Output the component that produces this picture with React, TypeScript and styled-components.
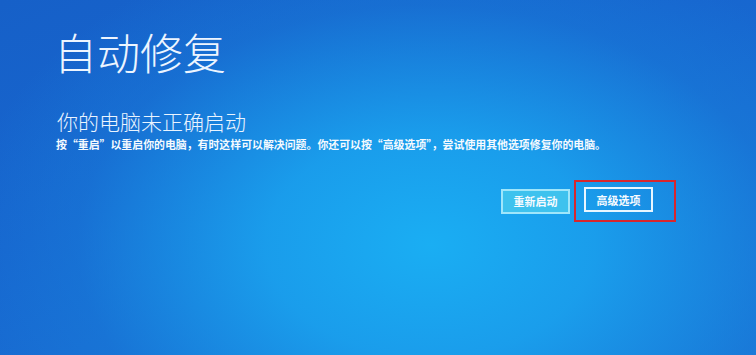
import React from "react";
import styled, { createGlobalStyle } from "styled-components";

const Global = createGlobalStyle`
  html, body { margin: 0; padding: 0; }
  body { width: 756px; height: 355px; overflow: hidden; }
`;

const Screen = styled.div`
  width: 756px;
  height: 355px;
  box-sizing: border-box;
  padding: 23px 0 0 57px;
  font-family: "Noto Sans CJK SC", "Noto Sans", sans-serif;
  color: #eef6ff;
  background:
    radial-gradient(ellipse 470px 320px at 430px 245px, rgba(26,174,243,1) 0%, rgba(26,162,238,0.9) 35%, rgba(24,125,218,0.45) 75%, rgba(22,100,205,0) 100%),
    linear-gradient(160deg, #1660c8 0%, #1766cf 40%, #1a78d8 100%);
  display: flex;
  flex-direction: column;
`;

const Title = styled.h1`
  margin: 0 0 0 -3px;
  font-size: 43px;
  font-weight: 300;
  line-height: 56px;
  color: #edf5ff;
`;

const Subtitle = styled.h2`
  margin: 29px 0 0;
  font-size: 21px;
  font-weight: 300;
  line-height: 26px;
  color: #eaf4ff;
`;

const Body = styled.p`
  margin: 2px 0 0 -1px;
  font-size: 10.9px;
  font-weight: 700;
  line-height: 16px;
  color: #f4faff;
`;

const ButtonRow = styled.div`
  display: flex;
  align-items: center;
  gap: 4px;
  margin: 28px 0 0 444px;
`;

const Button = styled.div<{ $filled?: boolean }>`
  box-sizing: border-box;
  width: 69px;
  height: 25px;
  display: flex;
  align-items: center;
  justify-content: center;
  border: 2px solid ${(p) => (p.$filled ? "#9fe6fb" : "#e9f6ff")};
  background: ${(p) => (p.$filled ? "#3ec2ee" : "transparent")};
  color: #f6fbff;
  font-size: 11px;
  font-weight: 700;
`;

const Highlight = styled.div`
  border: 2px solid #d8262d;
  padding: 5px 21px 8px 8px;
`;

export default function App() {
  return (
    <>
      <Global />
      <Screen>
        <Title>自动修复</Title>
        <Subtitle>你的电脑未正确启动</Subtitle>
        <Body>
          按“重启”以重启你的电脑，有时这样可以解决问题。你还可以按“高级选项”，尝试使用其他选项修复你的电脑。
        </Body>
        <ButtonRow>
          <Button $filled>重新启动</Button>
          <Highlight>
            <Button>高级选项</Button>
          </Highlight>
        </ButtonRow>
      </Screen>
    </>
  );
}
